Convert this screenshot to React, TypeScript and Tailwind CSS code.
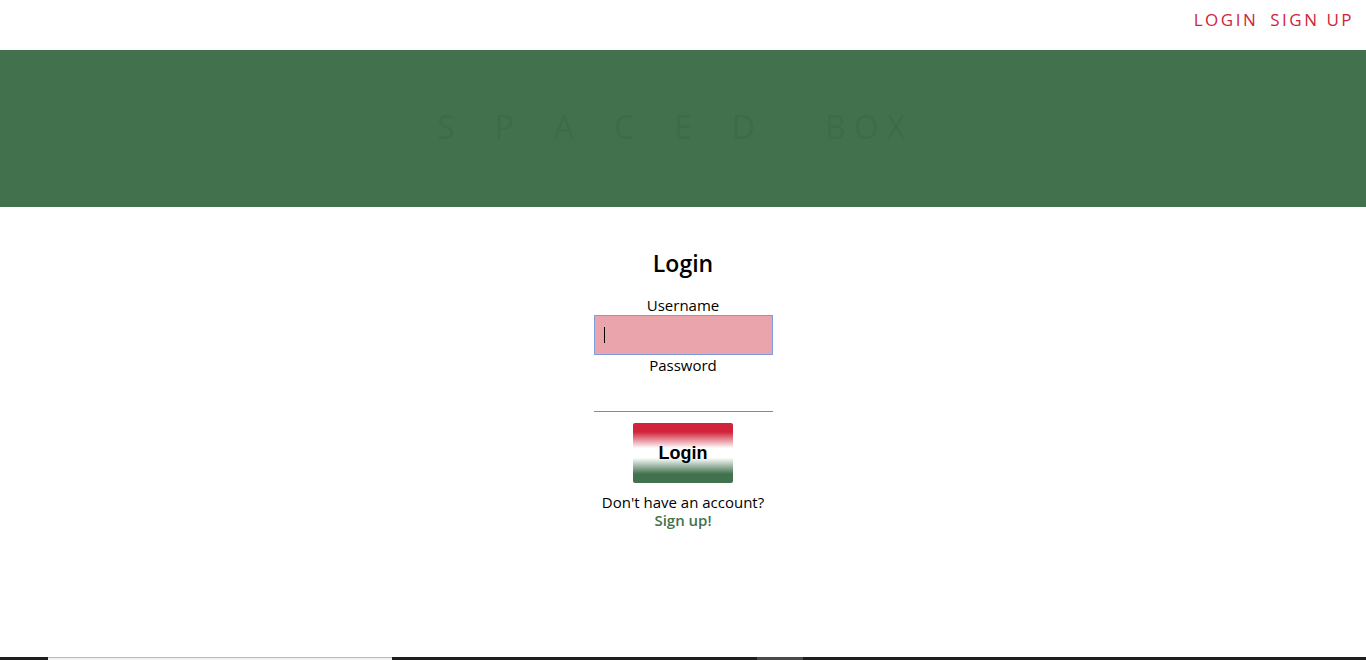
import { useState } from 'react';

const ubuntu = { fontFamily: '"Open Sans", "DejaVu Sans", sans-serif' };

function TopNav() {
  return (
    <header className="h-[50px] bg-white flex justify-end items-start pr-[12px] pt-[7px]">
      <nav className="flex gap-[12px] text-[17px] font-medium tracking-[2.5px] text-[#d1243b]" style={ubuntu}>
        <a href="#login">LOGIN</a>
        <a href="#signup">SIGN UP</a>
      </nav>
    </header>
  );
}

function Banner() {
  return (
    <section className="h-[157px] bg-[#42724d] flex items-center justify-center">
      <h1
        className="text-[32px] text-[#3d6c49] font-normal -mt-[4px] -ml-[16px]"
        style={ubuntu}
      >
        <span className="tracking-[40px]">SPACED</span>
        <span className="tracking-[8px] ml-[30px]">BOX</span>
      </h1>
    </section>
  );
}

function LoginForm() {
  const [username, setUsername] = useState('');
  const [password, setPassword] = useState('');

  return (
    <form
      className="flex flex-col items-center pt-[40px] text-black"
      style={ubuntu}
      onSubmit={(e) => e.preventDefault()}
    >
      <h2 className="text-[23px] font-semibold leading-[32px]">Login</h2>

      <label htmlFor="username" className="mt-[16px] text-[15px] leading-[20px]">
        Username
      </label>
      <div className="relative">
        <input
          id="username"
          value={username}
          onChange={(e) => setUsername(e.target.value)}
          className="block w-[179px] h-[40px] bg-[#eaa4ab] border border-[#7d9ce2] px-[9px] text-[15px] outline-none"
        />
        {username === '' && (
          <span className="absolute left-[10px] top-[12px] w-[1px] h-[16px] bg-black pointer-events-none" />
        )}
      </div>

      <label htmlFor="password" className="text-[15px] leading-[20px]">
        Password
      </label>
      <input
        id="password"
        type="password"
        value={password}
        onChange={(e) => setPassword(e.target.value)}
        className="block w-[179px] h-[37px] bg-transparent border-0 border-b border-b-[#8a8a8a] outline-none"
      />

      <button
        type="submit"
        className="mt-[11px] w-[100px] h-[60px] rounded-[2px] text-[18px] font-bold bg-[linear-gradient(180deg,#d1243b_15%,#ffffff_42%,#ffffff_58%,#42724d_85%)]"
        style={{ fontFamily: '"Liberation Sans", Arial, sans-serif' }}
      >
        Login
      </button>

      <p className="mt-[10px] text-[15px] leading-[19px]">Don't have an account?</p>
      <a href="#signup" className="text-[15px] leading-[16px] font-semibold text-[#42724d]">
        Sign up!
      </a>
    </form>
  );
}

function BottomStrip() {
  return (
    <div className="fixed bottom-0 left-0 right-0 h-[3px] bg-[#1e1e1e] flex">
      <div className="w-[48px]" />
      <div className="w-[344px] bg-[#f0f0f0] border-t border-[#bbbbbb]" />
      <div className="w-[365px]" />
      <div className="w-[46px] bg-[#4a4a4a]" />
    </div>
  );
}

export default function App() {
  return (
    <div className="min-h-[660px] bg-white">
      <TopNav />
      <Banner />
      <LoginForm />
      <BottomStrip />
    </div>
  );
}
